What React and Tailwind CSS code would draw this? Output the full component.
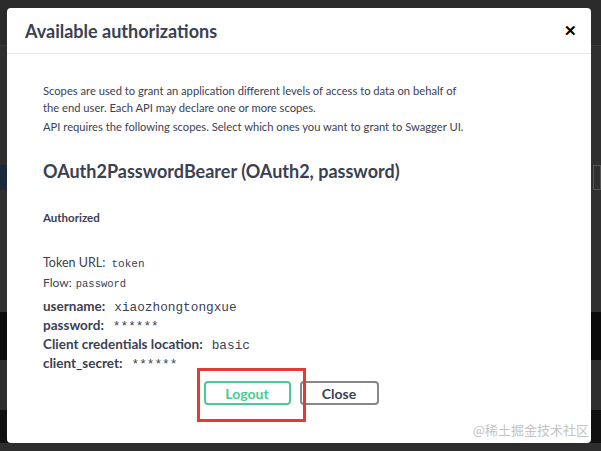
const SANS = "font-['Lato','Liberation_Sans',sans-serif]";
const MONO = "font-['Liberation_Mono','DejaVu_Sans_Mono',monospace]";

const creds = [
    { label: 'username:', value: 'xiaozhongtongxue' },
    { label: 'password:', value: '******' },
    { label: 'Client credentials location:', value: 'basic' },
    { label: 'client_secret:', value: '******' },
];

function PageBehind() {
    return (
        <div className="flex h-full w-full flex-col">
            <div className="h-[45px] bg-[#2a2a2a]" />
            <div className="h-px bg-[#3a3a3a]" />
            <div className="h-[119px] bg-[#2f2f2f]" />
            <div className="flex h-[25px] justify-between bg-[#2f2f2f]">
                <div className="w-[7px] bg-[#1d2a3b]" />
                <div className="w-[8px] border border-[#555] bg-[#2f2f2f]" />
            </div>
            <div className="h-[122px] bg-[#303030]" />
            <div className="h-[48px] bg-[#0b0b0b]" />
            <div className="h-[50px] bg-[#2e2e2e]" />
            <div className="h-[33px] bg-[#101010]" />
            <div className="flex-1 bg-[#2e2e2e]" />
        </div>
    );
}

function AuthModal() {
    return (
        <div className={`absolute left-[7px] top-[8px] h-[435px] w-[584px] overflow-hidden rounded bg-white text-[#3b4151] ${SANS}`}>
            <div className="flex h-[46px] items-center justify-between border-b border-[#e8e8e8] pl-[18px] pr-[14px]">
                <h3 className="text-[18px] font-bold leading-none">Available authorizations</h3>
                <button className="text-[15px] font-bold leading-none text-black">✕</button>
            </div>

            <div className="px-[36px] pt-[29px]">
                <p className="max-w-[432px] text-[11.2px] leading-[16.5px]">
                    Scopes are used to grant an application different levels of access to data on behalf of the end user. Each API may declare one or more scopes.
                </p>
                <p className="mt-[3px] text-[11.2px] leading-[16.5px]">
                    API requires the following scopes. Select which ones you want to grant to Swagger UI.
                </p>

                <h4 className="mt-[24px] text-[18px] font-bold leading-[22px]">OAuth2PasswordBearer (OAuth2, password)</h4>

                <h6 className="mt-[28px] text-[11.5px] font-bold leading-[16px]">Authorized</h6>

                <p className="mt-[29px] text-[12.5px] leading-[16px]">
                    Token URL: <code className={`${MONO} ml-[3px] text-[11px]`}>token</code>
                </p>
                <p className="mt-[3px] text-[12px] leading-[16px]">
                    Flow: <code className={`${MONO} ml-[1px] text-[10.5px]`}>password</code>
                </p>

                <div className="mt-[5px] flex flex-col">
                    {creds.map(c => (
                        <div key={c.label} className="flex h-[19px] items-baseline gap-[9px] leading-[19px]">
                            <span className="text-[13.5px] font-bold">{c.label}</span>
                            <code className={`${MONO} text-[12.75px]`}>{c.value}</code>
                        </div>
                    ))}
                </div>
            </div>

            <div className="mt-[8px] flex justify-center gap-[9px] pr-[16px]">
                <button className="relative h-[24px] w-[87px] rounded border-2 border-[#49cc90] text-[14px] font-bold text-[#49cc90]">
                    Logout
                    <span className="pointer-events-none absolute left-[-9px] top-[-15px] h-[54px] w-[109px] border-[3px] border-[#e53935]" />
                </button>
                <button className="h-[24px] w-[79px] rounded border-2 border-[#888] text-[14px] font-bold text-[#3b4151]">
                    Close
                </button>
            </div>

            <div className="absolute bottom-[4px] right-[2px] font-['Noto_Sans_CJK_SC',sans-serif] text-[13px] text-[#c3c3c3]">
                @稀土掘金技术社区
            </div>
        </div>
    );
}

export default function App() {
    return (
        <div className="relative h-[451px] w-[601px] overflow-hidden">
            <PageBehind />
            <AuthModal />
        </div>
    );
}
